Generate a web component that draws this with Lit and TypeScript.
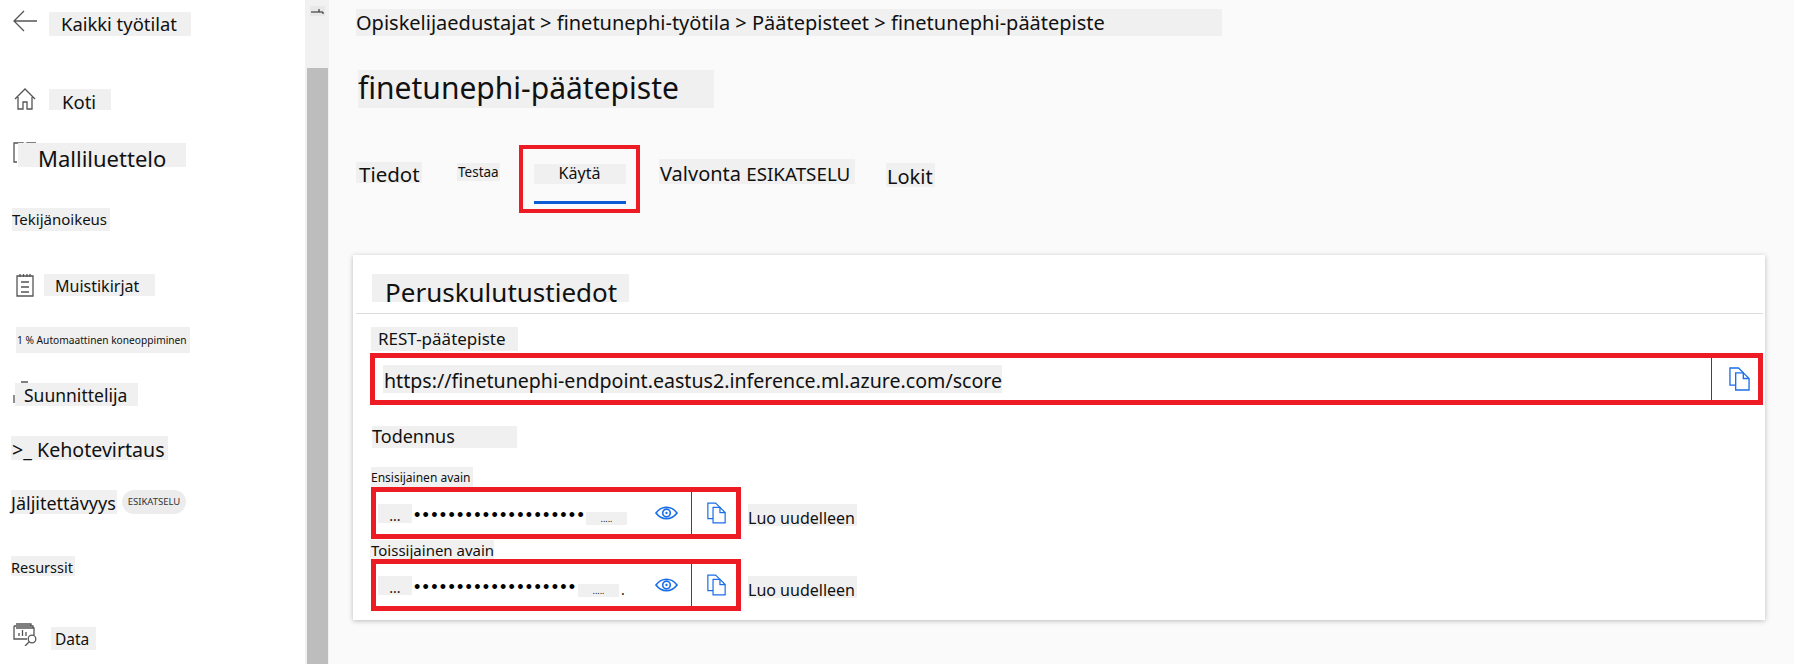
import { LitElement, html, css, svg } from 'lit';
import { customElement } from 'lit/decorators.js';

const copyIcon = svg`<svg class="copy" viewBox="0 0 22 25" fill="#fff" stroke="#1a6fe8" stroke-width="1.4">
  <path d="M1 1h9l5 5v13H1z" />
  <path d="M7 6h8l6 6v12H7z" />
  <path d="M15 6v6h6" fill="none" />
</svg>`;

const eyeIcon = svg`<svg class="eye" viewBox="0 0 24 14" fill="none" stroke="#1a6fe8" stroke-width="1.7">
  <path d="M1 7c3-4 7-6 11-6s8 2 11 6c-3 4-7 6-11 6S4 11 1 7z" />
  <circle cx="12" cy="7" r="4" />
  <circle cx="12" cy="7" r="1.200" fill="#1a6fe8" stroke="none" />
</svg>`;

@customElement('app-root')
export class AppRoot extends LitElement {
  static styles = css`
    :host {
      display: flex;
      width: 1794px;
      height: 664px;
      overflow: hidden;
      background: #fafafa;
      font-family: 'Noto Sans', sans-serif;
      color: #111;
    }

    .patch {
      display: block;
      flex: none;
      background: #f0f0f0;
      white-space: nowrap;
      box-sizing: border-box;
    }

    /* sidebar */
    .sidebar {
      width: 305px;
      flex: none;
      background: #fff;
      display: flex;
      flex-direction: column;
    }
    .row {
      display: flex;
      align-items: center;
      flex: none;
    }
    .icon {
      flex: none;
      fill: none;
      stroke: #555;
      stroke-width: 1.3;
    }

    .r-back { margin-top: 10px; padding-left: 13px; height: 26px; align-items: flex-start; }
    .r-back .icon { width: 24px; height: 22px; }
    .r-back .patch { margin: 2px 0 0 12px; width: 142px; height: 24px; font-size: 18.4px; line-height: 23px; padding-left: 12px; }

    .r-koti { margin-top: 52px; padding-left: 14px; }
    .r-koti .icon { width: 22px; height: 22px; }
    .r-koti .patch { margin-left: 13px; width: 62px; height: 21px; font-size: 18.5px; line-height: 25px; padding-left: 13px; }

    .r-malli { margin-top: 31px; padding-left: 13px; align-items: flex-start; }
    .r-malli .icon { width: 24px; height: 22px; margin-right: -19px; }
    .r-malli .patch { position: relative; margin-top: 2px; width: 168px; height: 24px; font-size: 22px; line-height: 31px; padding-left: 20px; }

    .r-tekija { margin-top: 41px; padding-left: 12px; }
    .r-tekija .patch { width: 98px; height: 23px; font-size: 15px; line-height: 23px; }

    .r-muisti { margin-top: 42px; padding-left: 16px; }
    .r-muisti .icon { width: 18px; height: 24px; }
    .r-muisti .patch { margin-left: 10px; width: 111px; height: 22px; font-size: 16px; line-height: 24px; padding-left: 11px; }

    .r-auto { margin-top: 30px; padding-left: 16px; }
    .r-auto .patch { width: 174px; height: 26px; font-size: 10.2px; line-height: 26px; padding-left: 1px; }

    .r-suun { margin-top: 28px; padding-left: 13px; align-items: flex-start; }
    .r-suun .icon { width: 18px; height: 25px; margin-right: -16px; }
    .r-suun .patch { position: relative; margin-top: 2px; width: 123px; height: 23px; font-size: 17.5px; line-height: 25px; padding-left: 9px; }

    .r-keho { margin-top: 30px; padding-left: 11px; }
    .r-keho .patch { width: 157px; height: 24px; font-size: 19.6px; line-height: 28px; padding-left: 1px; }

    .r-jalji { margin-top: 30px; padding-left: 11px; }
    .r-jalji .patch { width: 106px; height: 24px; font-size: 18px; line-height: 27px; }
    .badge {
      margin-left: 5px;
      width: 64px;
      height: 24px;
      border-radius: 12px;
      background: #ececec;
      color: #333;
      font-size: 9.5px;
      line-height: 24px;
      text-align: center;
      white-space: nowrap;
    }

    .r-resu { margin-top: 42px; padding-left: 11px; }
    .r-resu .patch { width: 64px; height: 20px; font-size: 14.5px; line-height: 23px; }

    .r-data { margin-top: 45px; padding-left: 13px; align-items: flex-start; }
    .r-data .icon { width: 25px; height: 25px; }
    .r-data .patch { margin: 6px 0 0 13px; width: 45px; height: 23px; font-size: 15.5px; line-height: 25px; padding-left: 4px; }

    /* scrollbar */
    .track {
      width: 24px;
      flex: none;
      background: #f1f1f1;
      display: flex;
      flex-direction: column;
      align-items: center;
      box-sizing: border-box;
      padding-top: 6px;
    }
    .arrow {
      width: 15px;
      height: 10px;
      background: #e8e8e8;
      flex: none;
    }
    .arrow svg { display: block; width: 15px; height: 10px; fill: none; stroke: #222; stroke-width: 1; }
    .thumb {
      margin-top: 52px;
      width: 21px;
      flex: 1;
      background: #bdbdbd;
    }

    /* main */
    .main {
      flex: 1;
      min-width: 0;
      display: flex;
      flex-direction: column;
      align-items: flex-start;
    }
    .crumbs {
      margin: 9px 0 0 27px;
      width: 866px;
      height: 27px;
      font-size: 20px;
      line-height: 28px;
    }
    .title {
      margin: 34px 0 0 29px;
      width: 356px;
      height: 38px;
      font-size: 30px;
      line-height: 36px;
    }
    .tabs {
      margin: 37px 0 0 27px;
      height: 68px;
      display: flex;
      align-items: flex-start;
    }
    .tab-info { margin-top: 17px; width: 66px; height: 21px; font-size: 20.5px; line-height: 24px; padding-left: 3px; }
    .tab-test { margin: 18px 0 0 35px; width: 43px; height: 18px; font-size: 13.5px; line-height: 18px; padding-left: 1px; }
    .tab-use {
      margin-left: 19px;
      width: 121px;
      height: 68px;
      box-sizing: border-box;
      border: 4px solid #ed1c24;
      display: flex;
      flex-direction: column;
      align-items: center;
    }
    .tab-use .patch { margin-top: 15px; width: 92px; height: 20px; font-size: 16px; line-height: 18px; text-align: center; }
    .tab-use i { display: block; margin-top: 17px; width: 92px; height: 3px; background: #0b5ad6; }
    .tab-mon { margin: 14px 0 0 19px; width: 196px; height: 25px; font-size: 20px; line-height: 29px; padding-left: 1px; }
    .tab-mon small { font-size: 18.8px; }
    .tab-log { margin: 18px 0 0 31px; width: 49px; height: 24px; font-size: 20px; line-height: 28px; padding-left: 1px; }

    .card {
      margin: 42px 0 0 24px;
      width: 1412px;
      height: 365px;
      background: #fff;
      box-shadow: 0 1px 5px rgba(0, 0, 0, 0.25);
      display: flex;
      flex-direction: column;
      align-items: flex-start;
    }
    .card-title {
      margin: 19px 0 0 19px;
      width: 257px;
      height: 28px;
      font-size: 26px;
      line-height: 36px;
      padding-left: 13px;
    }
    .divider {
      margin: 11px 0 0 3px;
      width: 1407px;
      height: 1px;
      flex: none;
      background: #dcdcdc;
    }
    .rest-label { margin: 13px 0 0 18px; width: 147px; height: 24px; font-size: 17px; line-height: 24px; padding-left: 7px; }

    .field {
      flex: none;
      box-sizing: border-box;
      display: flex;
      align-items: stretch;
      border: 5px solid #ed1c24;
      background: #fff;
    }
    .field .value { flex: 1; min-width: 0; display: flex; align-items: center; }
    .field .copy-cell {
      flex: none;
      border-left: 1px solid #444;
      display: flex;
      align-items: center;
      justify-content: center;
      box-sizing: border-box;
    }
    .copy { display: block; width: 21px; height: 24px; }
    .eye { display: block; width: 23px; height: 14px; margin-right: 13px; flex: none; }

    .rest { margin: 2px 0 0 17px; width: 1393px; height: 52px; }
    .rest .value .patch { margin-left: 8px; width: 619px; height: 28px; font-size: 19.6px; line-height: 31px; padding-left: 1px; }
    .rest .copy-cell { width: 47px; padding-left: 9px; }

    .auth-title { margin: 21px 0 0 19px; width: 145px; height: 22px; font-size: 18px; line-height: 20px; }
    .key-label-1 { margin: 19px 0 0 18px; width: 102px; height: 21px; font-size: 12px; line-height: 21px; }
    .key-label-2 { margin: 1px 0 0 17px; width: 124px; height: 21px; font-size: 15px; line-height: 21px; padding-left: 1px; }

    .key-row { display: flex; align-items: flex-start; margin-left: 18px; flex: none; }
    .key-row.first { margin-top: -1px; }
    .key-row.second { margin-top: -2px; }
    .key { width: 370px; height: 52px; }
    .key .copy-cell { width: 45px; padding-left: 4px; }
    .key .copy { width: 19px; height: 22px; }
    .key .more { margin-left: 2px; width: 34px; height: 19px; background: #f0f0f0; font-size: 14px; line-height: 24px; text-align: center; flex: none; }
    .key .dots { flex: none; margin: 3px 0 0 2px; white-space: nowrap; font-size: 18px; letter-spacing: 2.3px; line-height: 20px; font-family: 'Liberation Sans', sans-serif; color: #000; }
    .key .first-dots { width: 172px; }
    .key .second-dots { width: 164px; }
    .key .tail { flex: none; width: 41px; height: 13px; margin-top: 10px; background: #f0f0f0; font-size: 9px; line-height: 14px; text-align: center; }
    .key .end-dot { flex: none; margin: 9px 0 0 2px; font-size: 14px; line-height: 14px; }
    .key .gap { flex: 1; }
    .regen { margin: 17px 0 0 7px; width: 109px; height: 22px; font-size: 16px; line-height: 29px; }
  `;

  private renderKey(dotsClass: string, dots: number, endDot: boolean) {
    return html`
      <div class="field key">
        <div class="value">
          <span class="more">...</span>
          <span class="dots ${dotsClass}">${'•'.repeat(dots)}</span>
          <span class="tail">.....</span>
          ${endDot ? html`<span class="end-dot">.</span>` : ''}
          <span class="gap"></span>
          ${eyeIcon}
        </div>
        <div class="copy-cell">${copyIcon}</div>
      </div>
      <span class="patch regen">Luo uudelleen</span>
    `;
  }

  render() {
    return html`
      <nav class="sidebar">
        <div class="row r-back">
          <svg class="icon" viewBox="0 0 24 22"><path d="M24 11H1M11 1 1 11l10 10" /></svg>
          <span class="patch">Kaikki työtilat</span>
        </div>
        <div class="row r-koti">
          <svg class="icon" viewBox="0 0 22 22"><path d="M1 11 11 1l10 10M4 9v12h5v-7h4v7h5V9" /></svg>
          <span class="patch">Koti</span>
        </div>
        <div class="row r-malli">
          <svg class="icon" viewBox="0 0 24 22"><path d="M4 21H1V2h9l2 1 2-1h9" /></svg>
          <span class="patch">Malliluettelo</span>
        </div>
        <div class="row r-tekija"><span class="patch">Tekijänoikeus</span></div>
        <div class="row r-muisti">
          <svg class="icon" viewBox="0 0 18 24">
            <path d="M1 3h16v20H1zM4 1v3M7.500 1v3M11 1v3M14 1v3M5 9h8M5 14h8M5 19h8" />
          </svg>
          <span class="patch">Muistikirjat</span>
        </div>
        <div class="row r-auto"><span class="patch">1 % Automaattinen koneoppiminen</span></div>
        <div class="row r-suun">
          <svg class="icon" viewBox="0 0 18 25"><path d="M8 1h7M1 14v8" /></svg>
          <span class="patch">Suunnittelija</span>
        </div>
        <div class="row r-keho"><span class="patch">&gt;_ Kehotevirtaus</span></div>
        <div class="row r-jalji">
          <span class="patch">Jäljitettävyys</span>
          <span class="badge">ESIKATSELU</span>
        </div>
        <div class="row r-resu"><span class="patch">Resurssit</span></div>
        <div class="row r-data">
          <svg class="icon" viewBox="0 0 25 25">
            <path d="M3 3h15v2M1 5h19v2M1 5v13h13M3 7h18v7M6 15v-3M9.500 15v-6M13 15v-4" />
            <circle cx="19" cy="18" r="3.800" />
            <path d="M16 21l-4 4" />
          </svg>
          <span class="patch">Data</span>
        </div>
      </nav>

      <div class="track">
        <div class="arrow"><svg viewBox="0 0 15 10"><path d="M1 6h12v2M9 3v3" /></svg></div>
        <div class="thumb"></div>
      </div>

      <main class="main">
        <div class="patch crumbs">Opiskelijaedustajat &gt; finetunephi-työtila &gt; Päätepisteet &gt; finetunephi-päätepiste</div>
        <div class="patch title">finetunephi-päätepiste</div>

        <div class="tabs">
          <span class="patch tab-info">Tiedot</span>
          <span class="patch tab-test">Testaa</span>
          <div class="tab-use">
            <span class="patch">Käytä</span>
            <i></i>
          </div>
          <span class="patch tab-mon">Valvonta <small>ESIKATSELU</small></span>
          <span class="patch tab-log">Lokit</span>
        </div>

        <section class="card">
          <div class="patch card-title">Peruskulutustiedot</div>
          <div class="divider"></div>
          <div class="patch rest-label">REST-päätepiste</div>
          <div class="field rest">
            <div class="value">
              <span class="patch">https://finetunephi-endpoint.eastus2.inference.ml.azure.com/score</span>
            </div>
            <div class="copy-cell">${copyIcon}</div>
          </div>

          <div class="patch auth-title">Todennus</div>
          <div class="patch key-label-1">Ensisijainen avain</div>
          <div class="key-row first">${this.renderKey('first-dots', 20, false)}</div>
          <div class="patch key-label-2">Toissijainen avain</div>
          <div class="key-row second">${this.renderKey('second-dots', 19, true)}</div>
        </section>
      </main>
    `;
  }
}
